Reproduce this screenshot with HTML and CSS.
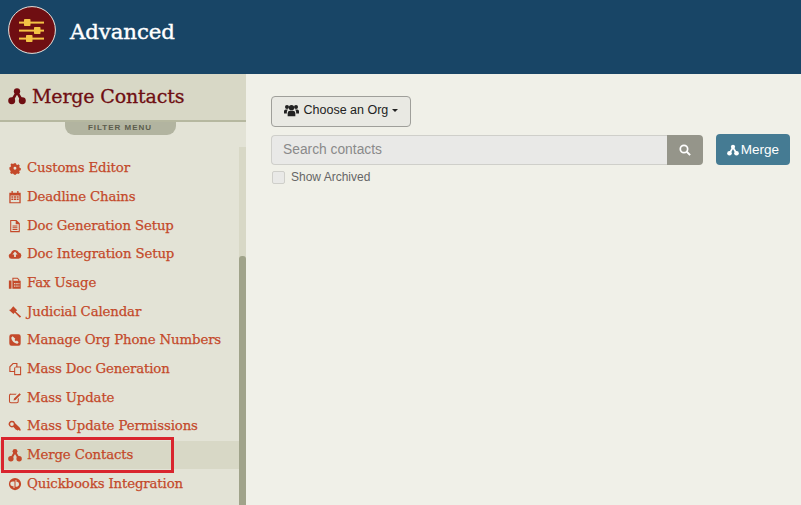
FILE: index.html
```html
<!DOCTYPE html>
<html lang="en">
<head>
<meta charset="utf-8">
<title>Advanced</title>
<link rel="stylesheet" href="styles.css">
</head>
<body>
<svg class="defs" width="0" height="0" aria-hidden="true">
  <symbol id="merge" viewBox="0 0 16 16">
    <path d="M8 4.500 3.600 12M8 4.500 12.400 12" fill="none" stroke="currentColor" stroke-width="2.400"/>
    <circle cx="8" cy="3.800" r="2.800"/><circle cx="3.300" cy="12.300" r="3.100"/><circle cx="12.700" cy="12.300" r="3.100"/>
  </symbol>
</svg>
<header class="topbar">
  <span class="badge">
    <svg viewBox="0 0 48 48" width="48" height="48">
      <circle cx="24" cy="24" r="23.400" fill="#6f0e12" stroke="#e9e4dc" stroke-width="1"/>
      <g fill="#f3c244">
        <rect x="11" y="15.600" width="25" height="2"/><rect x="16" y="13" width="6.500" height="7" rx=".7"/>
        <rect x="11" y="23.600" width="25" height="2"/><rect x="26" y="21" width="6.500" height="7" rx=".7"/>
        <rect x="11" y="31.600" width="25" height="2"/><rect x="18" y="29" width="6.500" height="7" rx=".7"/>
      </g>
    </svg>
  </span>
  <h1 class="page-title">Advanced</h1>
</header>
<div class="layout">
  <aside class="sidebar">
    <div class="side-head">
      <svg class="side-head-icon"><use href="#merge"/></svg>
      <h2 class="side-title">Merge Contacts</h2>
    </div>
    <div class="filter-wrap"><span class="filter-tab">FILTER MENU</span></div>
    <div class="nav-area">
      <ul class="nav">
        <li class="nav-item"><svg class="ico" viewBox="0 0 16 16"><path d="M6.700 2h2.600l.4 1.600 1.500.6 1.400-.8 1.800 1.800-.8 1.400.6 1.500 1.500.4v2.600l-1.500.4-.6 1.500.8 1.400-1.800 1.800-1.400-.8-1.500.6-.4 1.300H6.700l-.4-1.300-1.500-.6-1.400.8-1.800-1.800.8-1.400-.6-1.500L.7 9.900V7.300l1.500-.4.6-1.500L2 4l1.800-1.800 1.400.8 1.500-.6zM8 6.700a1.900 1.900 0 1 0 0 3.800 1.900 1.900 0 0 0 0-3.800z" fill-rule="evenodd" transform="translate(1 .8) scale(.87)"/></svg>Customs Editor</li>
        <li class="nav-item"><svg class="ico" viewBox="0 0 16 16"><path d="M4 1h1.500v2h5V1H12v2h2.500v12h-13V3H4zM3 6.300V14h10V6.300zM3.800 7.200h2.300v1.700H3.800zm3 0h2.400v1.700H6.800zm3.100 0h2.300v1.700H9.900zM3.800 9.800h2.300v1.700H3.800zm3 0h2.400v1.700H6.800zm3.100 0h2.300v1.700H9.900z" fill-rule="evenodd"/></svg>Deadline Chains</li>
        <li class="nav-item"><svg class="ico" viewBox="0 0 16 16"><path d="M2.500 1h7.200L13.500 4.800V15h-11zM3.700 2.200v11.600h8.600V6H8.800V2.200zM5.200 7.500h5.600v1H5.200zm0 2h5.600v1H5.200zm0 2h5.600v1H5.200z" fill-rule="evenodd"/></svg>Doc Generation Setup</li>
        <li class="nav-item"><svg class="ico" viewBox="0 0 16 16"><path d="M4 13.500a3.300 3.300 0 0 1-.6-6.500 4.700 4.700 0 0 1 9-.6 3.600 3.600 0 0 1-.4 7.100zM8 5 5 8.500h2v3h2v-3h2z" fill-rule="evenodd"/></svg>Doc Integration Setup</li>
        <li class="nav-item"><svg class="ico" viewBox="0 0 16 16"><path d="M1 5h3v9.500H1zM5 2h6l2 2v1.500h1.500v9H5zM6.200 3.200v2.300h5.600V4.500l-1.200-1.300zM7 8v1.500h1.500V8zm2.500 0v1.500H11V8zM12 8v1.500h1V8zM7 10.800v1.500h1.500v-1.500zm2.500 0v1.500H11v-1.500zm2.500 0v1.500h1v-1.500z" fill-rule="evenodd"/></svg>Fax Usage</li>
        <li class="nav-item"><svg class="ico" viewBox="0 0 16 16"><path d="M6 1.500 10.500 6 8.800 7.500 15 13l-1.500 1.700-5.800-6-1.500 1.600L1.200 5.800 3 5z"/></svg>Judicial Calendar</li>
        <li class="nav-item"><svg class="ico" viewBox="0 0 16 16"><path d="M4 1.500h8A2.500 2.500 0 0 1 14.500 4v8a2.500 2.500 0 0 1-2.500 2.500H4A2.500 2.500 0 0 1 1.500 12V4A2.500 2.500 0 0 1 4 1.500zm1.300 2.200L3.800 5.200c0 3.600 3.400 7 7 7l1.400-1.500-2-2-1.200.8-1.500-1.500.8-1.300z" fill-rule="evenodd"/></svg>Manage Org Phone Numbers</li>
        <li class="nav-item"><svg class="ico" viewBox="0 0 16 16"><path d="M5.500 1h5.300v4H15v10H7v-3.500H1.500V5zM6 2.600 2.800 5.800v4.500H7V6.700l2.500-1.900V2.300H6.300zM8.200 6.300v7.500h5.600V6.300z" fill-rule="evenodd"/></svg>Mass Doc Generation</li>
        <li class="nav-item"><svg class="ico" viewBox="0 0 16 16"><path d="M3.500 3H10L8.800 4.200H3.500A1.100 1.100 0 0 0 2.300 5.300v6.400a1.100 1.100 0 0 0 1.200 1.100H10a1.100 1.100 0 0 0 1.100-1.100V9l1.200-1.200v4A2.200 2.200 0 0 1 10 14H3.500a2.300 2.300 0 0 1-2.400-2.300V5.300A2.300 2.300 0 0 1 3.500 3zM13.200 2.500l1.500 1.500-6.200 6.200-2.200.6.600-2.200z" fill-rule="evenodd"/></svg>Mass Update</li>
        <li class="nav-item"><svg class="ico" viewBox="0 0 16 16"><path d="M4.500 2a3.800 3.800 0 0 1 3.700 2.800L13.500 10l1.300 2.800-1.500.6-1.200-1-.9.900-1.100-1.100-.8.500-3.100-3.500A3.800 3.800 0 1 1 4.500 2zm0 1.700a2.100 2.100 0 1 0 0 4.200 2.100 2.100 0 0 0 0-4.200z" fill-rule="evenodd"/></svg>Mass Update Permissions</li>
        <li class="nav-item nav-item-active"><svg class="ico"><use href="#merge"/></svg>Merge Contacts<span class="callout"></span></li>
        <li class="nav-item"><svg class="ico" viewBox="0 0 16 16"><path d="M8 1a7 7 0 1 1 0 14A7 7 0 0 1 8 1zM5.300 5a2.500 2.500 0 0 0 0 5.500h1v2h1.100V5zm3.300-1.500V11h1.800a2.800 2.800 0 0 0 0-5.500h-.8V3.500z" fill-rule="evenodd"/></svg>Quickbooks Integration</li>
      </ul>
      <div class="scrolltrack"><div class="scrollthumb"></div></div>
    </div>
  </aside>
  <main class="content">
    <button class="org-btn" type="button">
      <svg class="org-ico" viewBox="0 0 18 14"><circle cx="9" cy="3.600" r="3.200"/><circle cx="3.600" cy="2.800" r="2.400"/><circle cx="14.400" cy="2.800" r="2.400"/><path d="M4.400 14V10A3 3 0 0 1 7.300 7.300h3.400a3 3 0 0 1 2.900 2.700v4zM0 10.500V7.700A2.200 2.200 0 0 1 2 5.800h2.700A4.500 4.500 0 0 0 3.400 9.500v1zm18 0V7.700A2.200 2.200 0 0 0 16 5.800h-2.700a4.500 4.500 0 0 1 1.300 3.700v1z"/></svg>
      <span>Choose an Org</span><span class="caret"></span>
    </button>
    <div class="search-row">
      <div class="search-group">
        <input class="search-input" type="text" placeholder="Search contacts">
        <button class="search-btn" type="button" aria-label="Search">
          <svg viewBox="0 0 14 14" width="12" height="12"><circle cx="5.800" cy="5.800" r="4.300" fill="none" stroke="currentColor" stroke-width="2"/><path d="m9 9 4 4" stroke="currentColor" stroke-width="2.200"/></svg>
        </button>
      </div>
      <button class="merge-btn" type="button"><svg class="merge-ico"><use href="#merge"/></svg>Merge</button>
    </div>
    <label class="archived"><input class="archived-box" type="checkbox"><span>Show Archived</span></label>
  </main>
</div>
</body>
</html>
```
FILE: styles.css
```css
* { box-sizing: border-box; }
html, body { margin: 0; padding: 0; height: 100%; overflow: hidden; }
body { display: flex; flex-direction: column; background: #f0f0e8; font-family: "Liberation Sans", Arial, sans-serif; }
.defs { position: absolute; }
svg { fill: currentColor; display: block; }

.topbar { flex: 0 0 74px; background: #184566; display: flex; align-items: flex-start; padding: 6px 0 0 8px; }
.badge { width: 48px; height: 48px; flex: none; }
.page-title { margin: 8px 0 0 14px; font: 400 21.300px/36px "DejaVu Serif", serif; color: #fff; letter-spacing: -.1px; -webkit-text-stroke: .4px #fff; }

.layout { flex: 1; display: flex; min-height: 0; }
.sidebar { width: 246px; flex: none; background: #e3e3d6; display: flex; flex-direction: column; overflow: hidden; }
.side-head { height: 48px; flex: none; background: #d8d8c6; border-bottom: 2px solid #b6b8a0; display: flex; align-items: center; padding: 0 0 2px 8px; color: #6f0e12; }
.side-head-icon { width: 18px; height: 18px; flex: none; }
.side-title { margin: 0 0 0 6px; font: 400 19px/24px "DejaVu Serif", serif; letter-spacing: -.15px; color: #6f0e12; -webkit-text-stroke: .3px #6f0e12; }
.filter-wrap { display: flex; justify-content: center; padding-right: 6px; flex: none; }
.filter-tab { width: 111px; height: 13px; background: #b2b4a0; border-radius: 0 0 9px 9px; color: #5c5c4c; font: 700 8px/12px "Liberation Sans", sans-serif; letter-spacing: 1px; text-align: center; }

.nav-area { flex: 1; display: flex; min-height: 0; }
.nav { flex: 1; margin: 0; padding: 18.800px 0 0; list-style: none; }
.nav-item { position: relative; height: 28.700px; display: flex; align-items: center; padding-left: 8px; color: #c4492a; font: 400 13.300px/28px "DejaVu Serif", serif; letter-spacing: -.13px; white-space: nowrap; -webkit-text-stroke: .25px #c4492a; }
.nav-item-active { background: #d8d8c6; }
.ico { width: 14px; height: 14px; flex: none; margin-right: 5px; }
.callout { position: absolute; left: 1px; top: -4px; width: 173px; height: 36px; border: 3px solid #d9252e; }
.scrolltrack { width: 7px; flex: none; margin-top: 12px; background: #d8d8c6; position: relative; }
.scrollthumb { position: absolute; left: 0; right: 0; top: 109px; bottom: 0; background: #a0a38a; border-radius: 3px 3px 0 0; }

.content { flex: 1; padding: 22px 11px 0 25px; min-width: 0; }
.org-btn { display: flex; align-items: center; width: 140px; height: 31px; padding: 0 0 3px 12px; background: #e9e9e3; border: 1px solid #9f9f9a; border-radius: 4px; color: #222; font: 400 12.500px/18px "Liberation Sans", sans-serif; }
.org-ico { width: 15px; height: 13px; margin-right: 4.500px; flex: none; }
.caret { width: 0; height: 0; margin-left: 4px; border-left: 3.500px solid transparent; border-right: 3.500px solid transparent; border-top: 3.500px solid #222; }
.search-row { display: flex; align-items: center; margin-top: 7px; }
.search-group { display: flex; width: 432px; height: 30px; flex: none; }
.search-input { flex: 1; min-width: 0; height: 30px; padding: 0 11px; background: #e9e9e7; border: 1px solid #cfcfca; border-right: 0; border-radius: 4px 0 0 4px; font: 400 13.800px "Liberation Sans", sans-serif; outline: none; }
.search-input::placeholder { color: #8a8a8a; opacity: 1; }
.search-btn { width: 36px; height: 30px; padding: 0; display: flex; align-items: center; justify-content: center; background: #95958a; border: 0; border-radius: 0 4px 4px 0; color: #fff; }
.merge-btn { display: flex; align-items: center; justify-content: center; width: 74px; height: 31px; margin-left: 13px; padding: 0; background: #457b93; border: 0; border-radius: 4px; color: #fff; font: 400 13.500px/18px "Liberation Sans", sans-serif; }
.merge-ico { width: 12px; height: 12px; margin-right: 2px; }
.archived { display: flex; align-items: center; margin-top: 4px; height: 16px; color: #666; font-size: 12px; }
.archived-box { appearance: none; width: 13px; height: 13px; margin: 0 6px 0 1px; background: #e9e9e7; border: 1px solid #cfcfca; border-radius: 2px; }
```
